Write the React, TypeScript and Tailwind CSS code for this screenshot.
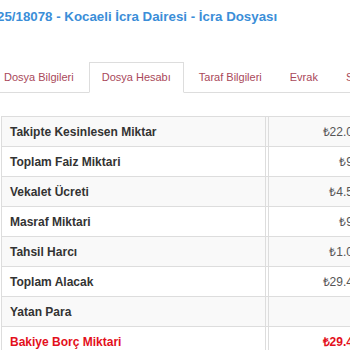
const tabs = ["Dosya Bilgileri", "Dosya Hesabı", "Taraf Bilgileri", "Evrak", "Satış"];

const rows = [
  { label: "Takipte Kesinlesen Miktar", value: "₺22.050,00" },
  { label: "Toplam Faiz Miktari", value: "₺985,40" },
  { label: "Vekalet Ücreti", value: "₺4.512,30" },
  { label: "Masraf Miktari", value: "₺985,40" },
  { label: "Tahsil Harcı", value: "₺1.024,00" },
  { label: "Toplam Alacak", value: "₺29.456,70" },
  { label: "Yatan Para", value: "₺0,00" },
  { label: "Bakiye Borç Miktari", value: "₺29.456,70", danger: true },
];

export default function App() {
  return (
    <div className="w-[350px] h-[350px] overflow-hidden bg-white font-['Liberation_Sans',Arial,sans-serif]">
      <h3 className="-ml-[3px] pt-[9px] h-[32px] text-[13.3px] leading-[16px] font-bold text-[#3b8ed8] whitespace-nowrap">
        25/18078 - Kocaeli İcra Dairesi - İcra Dosyası
      </h3>

      <ul className="-ml-[9px] mt-[30px] w-[420px] flex border-b border-[#dddddd] text-[11px] text-[#a9485a] whitespace-nowrap">
        {tabs.map((t, i) => (
          <li
            key={t}
            className={
              i === 1
                ? "mr-[2px] -mb-px h-[31px] px-[12px] flex items-center bg-white border border-[#dddddd] border-b-white"
                : "mr-[2px] h-[30px] px-[12px] flex items-center border border-transparent"
            }
          >
            {t}
          </li>
        ))}
      </ul>

      <div className="ml-[1px] mt-[23px] w-[420px] border-t border-l border-[#dddddd] text-[12px]">
        {rows.map((r, i) => (
          <div
            key={r.label}
            className={`flex h-[30px] border-b border-[#dddddd] ${i % 2 === 0 ? "bg-[#f9f9f9]" : "bg-white"}`}
          >
            <div
              className={`w-[264px] shrink-0 pl-[8px] flex items-center font-bold border-r border-[#dddddd] ${r.danger ? "text-[#e3101c]" : "text-[#333333]"}`}
            >
              {r.label}
            </div>
            <div className="w-[2px] shrink-0" />
            <div
              className={`w-[123px] shrink-0 pr-[8px] flex items-center justify-end border-l border-[#dddddd] ${r.danger ? "font-bold text-[#e3101c]" : "text-[#555555]"}`}
            >
              {r.value}
            </div>
          </div>
        ))}
      </div>
    </div>
  );
}
